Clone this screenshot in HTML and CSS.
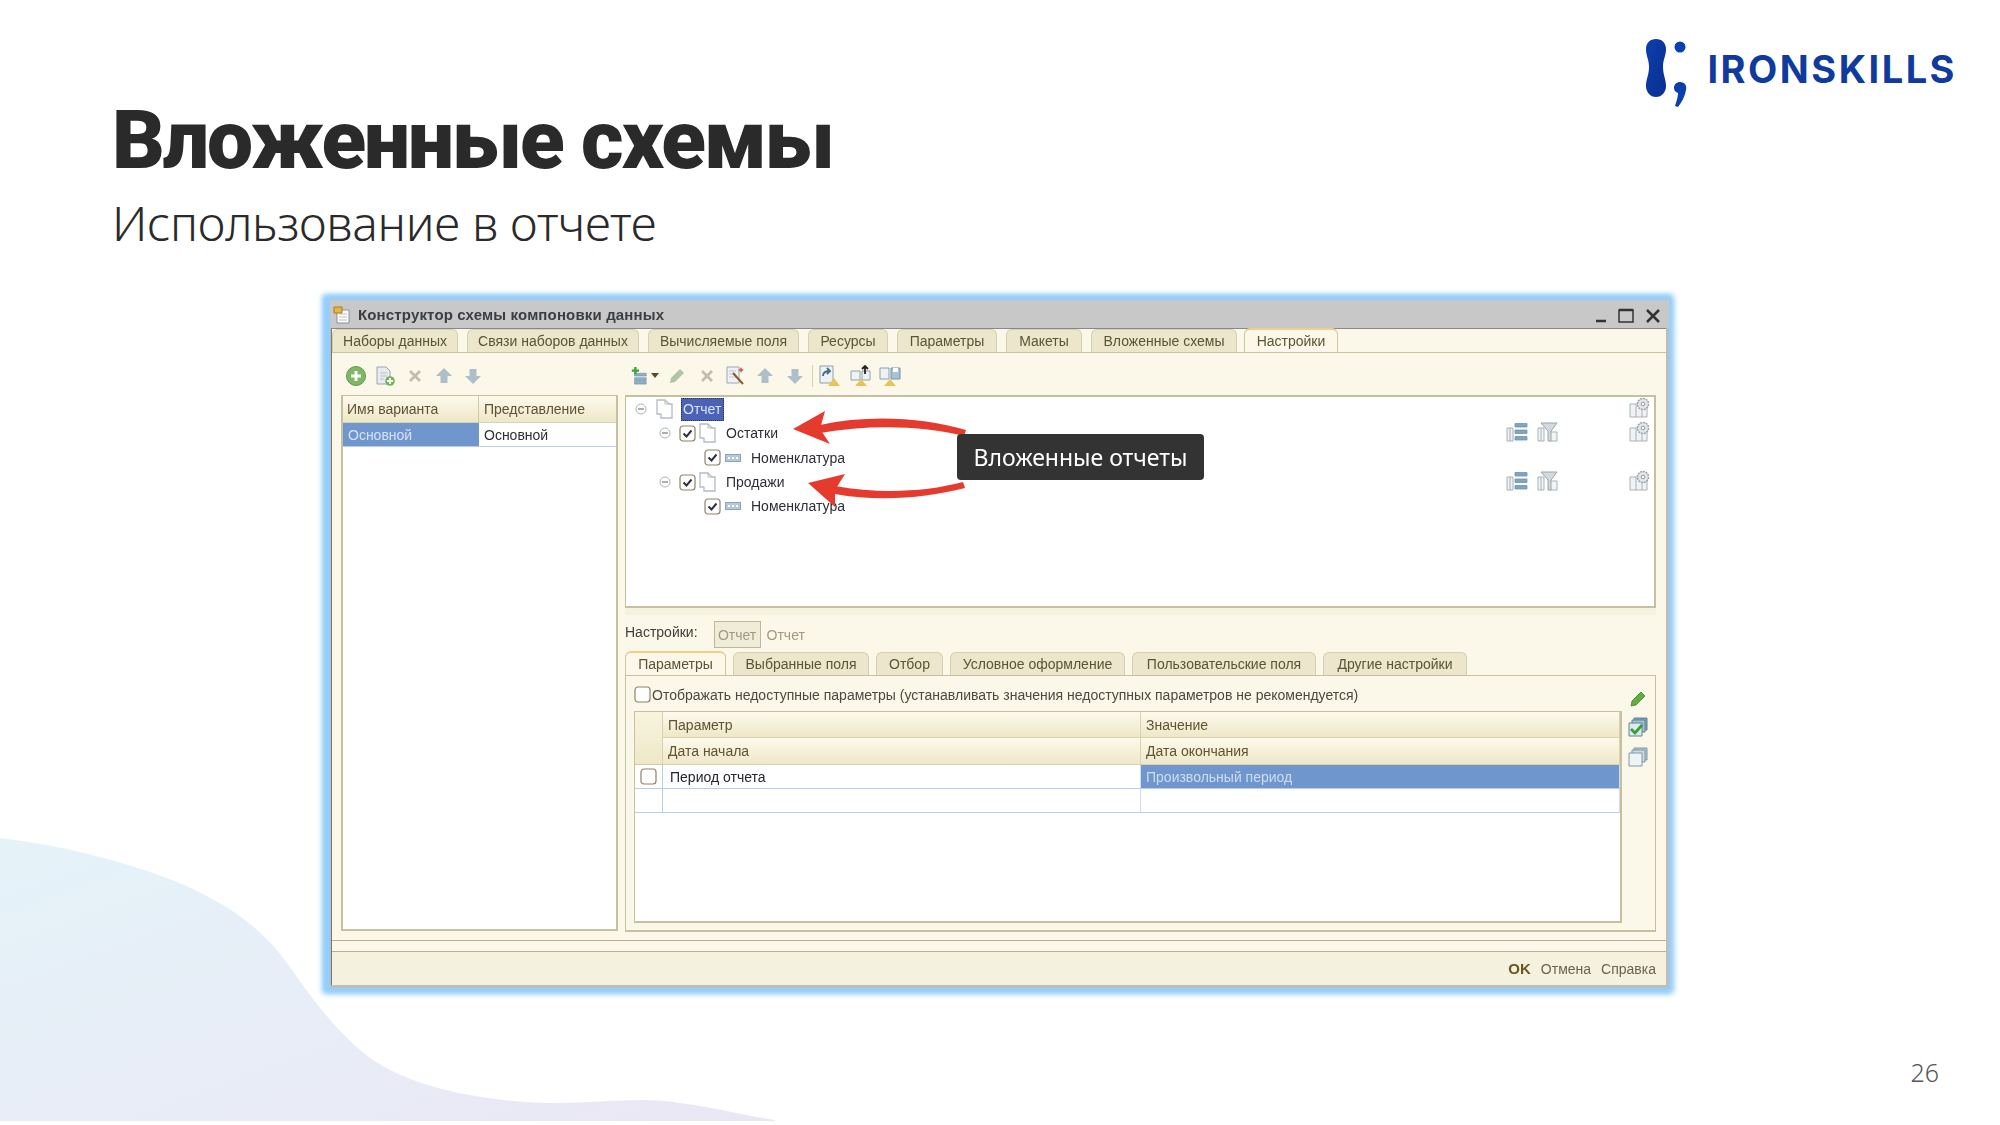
FILE: index.html
```html
<!DOCTYPE html>
<html lang="ru">
<head>
<meta charset="utf-8">
<title>Вложенные схемы</title>
<link rel="stylesheet" href="styles.css">
</head>
<body>
<svg width="0" height="0" class="defs">
  <defs>
    <linearGradient id="blobfill" x1="0" y1="0" x2="1" y2="1">
      <stop offset="0" stop-color="#e5f3f9"/><stop offset="1" stop-color="#eae7f4"/>
    </linearGradient>
    <linearGradient id="markfill" x1="0" y1="0" x2="1" y2="1">
      <stop offset="0" stop-color="#0b3fae"/><stop offset="1" stop-color="#0a2f8e"/>
    </linearGradient>
    <symbol id="up" viewBox="0 0 18 18"><path d="M9 1 17 9H12.500V16H5.500V9H1Z" fill="#aebfc9"/></symbol>
    <symbol id="down" viewBox="0 0 18 18"><path d="M9 17 17 9H12.500V2H5.500V9H1Z" fill="#aebfc9"/></symbol>
    <symbol id="cross" viewBox="0 0 16 16"><path d="M2 4 4 2 8 6 12 2 14 4 10 8 14 12 12 14 8 10 4 14 2 12 6 8Z" fill="#c4bbb2"/></symbol>
    <symbol id="doc" viewBox="0 0 20 20"><path d="M2 1H10L14 5V15H2Z" fill="#fff" stroke="#b4bcc6" stroke-width="1.300"/><path d="M14 5H17V19H6V15" fill="#fff" stroke="#b4bcc6" stroke-width="1.300"/><path d="M10 1V5H14" fill="none" stroke="#b4bcc6"/></symbol>
    <symbol id="minus" viewBox="0 0 12 12"><circle cx="6" cy="6" r="5" fill="#fff" stroke="#aeb2b2"/><path d="M3 6H9" stroke="#7d8488" stroke-width="1.300"/></symbol>
    <symbol id="check" viewBox="0 0 17 17"><rect x="1" y="1" width="15" height="15" rx="3" fill="#fff" stroke="#8d8467" stroke-width="1.200"/><path d="M4.500 8.500 7.500 11.500 12.500 5.500" fill="none" stroke="#2e3238" stroke-width="2"/></symbol>
    <symbol id="box" viewBox="0 0 17 17"><rect x="1" y="1" width="15" height="15" rx="3" fill="#fff" stroke="#8d8467" stroke-width="1.200"/></symbol>
    <symbol id="field" viewBox="0 0 16 8"><rect x=".500" y=".500" width="15" height="7" fill="#b7c9d8" stroke="#8ea3b5"/><path d="M3 4H5M7 4H9M11 4H13" stroke="#fff" stroke-width="2"/></symbol>
    <symbol id="db" viewBox="0 0 22 20"><path d="M1 6H7V19H1ZM4 6V19" fill="#eef0f1" stroke="#a8b2b8"/><path d="M9 1.500H21V5H9ZM9 8H21V11.500H9ZM9 14.500H21V18H9Z" fill="#7fa5c4" stroke="#6f94b3" stroke-width=".8"/></symbol>
    <symbol id="filt" viewBox="0 0 21 20"><path d="M1 6H7V19H1ZM4 6V19M13 10H20V19H13Z" fill="#f3f4f5" stroke="#a8b2b8"/><path d="M4 1H20L14 9V19H11V9Z" fill="#d3d9dc" stroke="#9aa5ab"/></symbol>
    <symbol id="gear" viewBox="0 0 21 20"><path d="M1 6H18V19H1ZM7 6V19M13 6V19" fill="#f1f2f3" stroke="#a8b2b8"/><circle cx="14" cy="6" r="5.500" fill="#e4e7e9" stroke="#9aa4aa" stroke-width="1.500" stroke-dasharray="2 .8"/><circle cx="14" cy="6" r="1.800" fill="#fff" stroke="#8c979d"/></symbol>
  </defs>
</svg>

<main class="slide">
  <svg class="blob" viewBox="0 0 800 300" width="800" height="300" aria-hidden="true">
    <path d="M0 0C60 7 120 22 172 42C225 63 262 90 287 125C305 150 335 195 373 222C410 247 470 262 545 265C600 266 640 258 680 265C720 270 745 278 775 282L775 283H0Z" fill="url(#blobfill)"/>
  </svg>

  <header class="top">
    <div class="headings">
      <h1 class="title">Вложенные схемы</h1>
      <p class="subtitle">Использование в отчете</p>
    </div>
    <div class="logo">
      <svg class="logo-mark" viewBox="0 0 46 70" width="46" height="70" aria-hidden="true">
        <path d="M11 1C17 1 21 5 21 11C21 18 18 21 18 29C18 37 21 41 21 48C21 54 17 59 11 59C5 59 1 54 1 48C1 41 4 37 4 29C4 21 1 18 1 11C1 5 5 1 11 1Z" fill="url(#markfill)"/>
        <circle cx="35" cy="9" r="5.500" fill="#0c3fae"/>
        <path d="M35 44C40 44 42 48 41 52C40 58 37 64 33 69L30 68C32 62 33 58 33 55C30 54 29 52 29 50C29 46 32 44 35 44Z" fill="#0c3fae"/>
      </svg>
      <span class="logo-text">IRONSKILLS</span>
    </div>
  </header>

  <section class="window">
    <div class="titlebar">
      <svg class="tb-icon" viewBox="0 0 18 18" width="18" height="18" aria-hidden="true"><path d="M4 4H16V17H4Z" fill="#fff" stroke="#8a8f96"/><path d="M6 8H14M6 11H14M6 14H14" stroke="#b8bcc2"/><path d="M1 1H9V7H1Z" fill="#e8b63c" stroke="#a97d1c"/></svg>
      <span class="tb-title">Конструктор схемы компоновки данных</span>
      <div class="win-ctrls">
        <svg viewBox="0 0 72 16" width="72" height="16" aria-hidden="true"><path d="M7 14H17" stroke="#333" stroke-width="2.500"/><path d="M30 3H44V15H30Z" fill="none" stroke="#333" stroke-width="1.500"/><path d="M30 3H44" stroke="#333" stroke-width="2.500"/><path d="M58 3 70 15M70 3 58 15" stroke="#333" stroke-width="2.500"/></svg>
      </div>
    </div>

    <div class="frame">
      <nav class="tabs top-tabs">
        <span class="tab t1">Наборы данных</span>
        <span class="tab t2">Связи наборов данных</span>
        <span class="tab t3">Вычисляемые поля</span>
        <span class="tab t4">Ресурсы</span>
        <span class="tab t5">Параметры</span>
        <span class="tab t6">Макеты</span>
        <span class="tab t7">Вложенные схемы</span>
        <span class="tab active t8">Настройки</span>
      </nav>

      <div class="work">
        <aside class="left">
          <div class="toolbar tb-left">
            <svg class="ic-plus" viewBox="0 0 20 20" width="20" height="20" aria-hidden="true"><circle cx="10" cy="10" r="9.500" fill="#7eb867" stroke="#5e9a4c"/><path d="M10 5V15M5 10H15" stroke="#fff" stroke-width="3"/></svg>
            <svg class="ic-new" viewBox="0 0 20 20" width="20" height="20" aria-hidden="true"><path d="M2 1H11L15 5V18H2Z" fill="#e6ecf0" stroke="#98a6af"/><path d="M5 7H12M5 10H12M5 13H9" stroke="#b7c2c9"/><circle cx="15" cy="15" r="4.800" fill="#74b35d"/><path d="M15 12V18M12 15H18" stroke="#fff" stroke-width="1.800"/></svg>
            <svg class="ic-x" width="16" height="16" aria-hidden="true"><use href="#cross"/></svg>
            <svg class="ic-a" width="18" height="18" aria-hidden="true"><use href="#up"/></svg>
            <svg class="ic-b" width="18" height="18" aria-hidden="true"><use href="#down"/></svg>
          </div>
          <div class="list">
            <div class="list-head"><span class="lh c1">Имя варианта</span><span class="lh c2">Представление</span></div>
            <div class="list-row"><span class="cell sel c1">Основной</span><span class="cell c2">Основной</span></div>
          </div>
        </aside>

        <div class="right">
          <div class="toolbar tb-right">
            <svg class="r0" viewBox="0 0 20 20" width="18" height="18" aria-hidden="true"><path d="M5 7H18V10H5ZM5 12H18V15H5ZM5 16H18V19H5Z" fill="#8fb0c9" stroke="#6e90aa" stroke-width=".7"/><path d="M6 0V8M2 4H10" stroke="#3ba33c" stroke-width="2.600"/></svg>
            <svg class="r1" viewBox="0 0 8 5" width="8" height="5" aria-hidden="true"><path d="M0 0H8L4 5Z" fill="#5a4a20"/></svg>
            <svg class="r2" viewBox="0 0 16 16" width="16" height="16" aria-hidden="true"><path d="M11 1 15 5 6 14 1 15 2 10Z" fill="#b3c4a6"/></svg>
            <svg class="r3" width="16" height="16" aria-hidden="true"><use href="#cross"/></svg>
            <svg class="r4" viewBox="0 0 20 20" width="20" height="20" aria-hidden="true"><path d="M1 1H13V17H1Z" fill="#eef2f5" stroke="#9aa8b2"/><path d="M3 5H10M3 8H10M3 11H10" stroke="#bfc8ce"/><path d="M7 7 17 18" stroke="#8a5a2a" stroke-width="2"/><path d="M15 1 16 3 18 4 16 5 15 7 14 5 12 4 14 3Z" fill="#d1566c"/></svg>
            <svg class="r5" width="18" height="18" aria-hidden="true"><use href="#up"/></svg>
            <svg class="r6" width="18" height="18" aria-hidden="true"><use href="#down"/></svg>
            <span class="sep"></span>
            <svg class="r7" viewBox="0 0 22 22" width="22" height="22" aria-hidden="true"><path d="M1 1H14V18H1Z" fill="#eef2f5" stroke="#8ea0ac"/><path d="M4 11C4 7 7 6 11 6M8 3 11 6 8 9" fill="none" stroke="#3f6d8e" stroke-width="1.800"/><path d="M15 13 21 21H9Z" fill="#e8c35a"/></svg>
            <svg class="r8" viewBox="0 0 22 22" width="22" height="22" aria-hidden="true"><path d="M1 6H10V15H1ZM12 6H20V15H12Z" fill="#eef2f5" stroke="#8ea0ac"/><path d="M15 9V1M12 4 15 1 18 4" fill="none" stroke="#222" stroke-width="1.800"/><path d="M11 14 17 21H5Z" fill="#e8c35a"/></svg>
            <svg class="r9" viewBox="0 0 22 22" width="22" height="22" aria-hidden="true"><path d="M1 3H10V14H1Z" fill="#eef2f5" stroke="#8ea0ac"/><path d="M12 3H21V14H12Z" fill="#a9c2d4" stroke="#6f97b4"/><path d="M14 3H19V7H14Z" fill="#fff"/><path d="M11 14 17 21H5Z" fill="#e8c35a"/></svg>
          </div>

          <div class="tree">
            <div class="node n0">
              <svg class="mn" width="12" height="12" aria-hidden="true"><use href="#minus"/></svg>
              <svg class="dc d0" width="20" height="20" aria-hidden="true"><use href="#doc"/></svg>
              <span class="node-sel">Отчет</span>
              <span class="node-icons"><svg class="gr" width="21" height="20" aria-hidden="true"><use href="#gear"/></svg></span>
            </div>
            <div class="node n1">
              <svg class="mn" width="12" height="12" aria-hidden="true"><use href="#minus"/></svg>
              <svg class="ck" width="17" height="17" aria-hidden="true"><use href="#check"/></svg>
              <svg class="dc" width="20" height="20" aria-hidden="true"><use href="#doc"/></svg>
              <span class="node-text">Остатки</span>
              <span class="node-icons"><svg width="22" height="20" aria-hidden="true"><use href="#db"/></svg><svg width="21" height="20" aria-hidden="true"><use href="#filt"/></svg><svg class="gr" width="21" height="20" aria-hidden="true"><use href="#gear"/></svg></span>
            </div>
            <div class="node n2">
              <svg class="ck" width="17" height="17" aria-hidden="true"><use href="#check"/></svg>
              <svg class="fd" width="16" height="8" aria-hidden="true"><use href="#field"/></svg>
              <span class="node-text">Номенклатура</span>
            </div>
            <div class="node n1">
              <svg class="mn" width="12" height="12" aria-hidden="true"><use href="#minus"/></svg>
              <svg class="ck" width="17" height="17" aria-hidden="true"><use href="#check"/></svg>
              <svg class="dc" width="20" height="20" aria-hidden="true"><use href="#doc"/></svg>
              <span class="node-text">Продажи</span>
              <span class="node-icons"><svg width="22" height="20" aria-hidden="true"><use href="#db"/></svg><svg width="21" height="20" aria-hidden="true"><use href="#filt"/></svg><svg class="gr" width="21" height="20" aria-hidden="true"><use href="#gear"/></svg></span>
            </div>
            <div class="node n2">
              <svg class="ck" width="17" height="17" aria-hidden="true"><use href="#check"/></svg>
              <svg class="fd" width="16" height="8" aria-hidden="true"><use href="#field"/></svg>
              <span class="node-text">Номенклатура</span>
            </div>
          </div>

          <div class="settings-row">
            <span class="set-label">Настройки:</span>
            <span class="set-box">Отчет</span>
            <span class="set-val">Отчет</span>
          </div>

          <nav class="tabs sub-tabs">
            <span class="tab active s1">Параметры</span>
            <span class="tab s2">Выбранные поля</span>
            <span class="tab s3">Отбор</span>
            <span class="tab s4">Условное оформление</span>
            <span class="tab s5">Пользовательские поля</span>
            <span class="tab s6">Другие настройки</span>
          </nav>

          <div class="panel">
            <div class="panel-main">
              <div class="show-row">
                <svg width="17" height="17" aria-hidden="true"><use href="#box"/></svg>
                <span>Отображать недоступные параметры (устанавливать значения недоступных параметров не рекомендуется)</span>
              </div>
              <div class="grid">
                <div class="g-mark"></div>
                <div class="g-h">Параметр</div>
                <div class="g-h">Значение</div>
                <div class="g-h">Дата начала</div>
                <div class="g-h">Дата окончания</div>
                <div class="g-m"><svg width="17" height="17" aria-hidden="true"><use href="#box"/></svg></div>
                <div class="g-c dark">Период отчета</div>
                <div class="g-c chosen">Произвольный период</div>
                <div class="g-m"></div>
                <div class="g-c"></div>
                <div class="g-c"></div>
              </div>
            </div>
            <div class="side-icons">
              <svg viewBox="0 0 16 16" width="16" height="16" aria-hidden="true"><path d="M11 1 15 5 6 14 1 15 2 10Z" fill="#62ad3f" stroke="#3f8327" stroke-width=".8"/></svg>
              <svg viewBox="0 0 20 20" width="20" height="20" aria-hidden="true"><path d="M6 1H19V13H6Z" fill="#7fa1b4" stroke="#5e8297"/><path d="M4 3H17V15H4Z" fill="#a6c0cf" stroke="#5e8297"/><path d="M1 6H14V19H1Z" fill="#dfe9ef" stroke="#5e8297"/><path d="M3 12 7 16 14 8" fill="none" stroke="#38a02e" stroke-width="2.800"/></svg>
              <svg viewBox="0 0 20 20" width="20" height="20" aria-hidden="true"><path d="M6 1H19V13H6Z" fill="#b6c6d0" stroke="#7f97a6"/><path d="M4 3H17V15H4Z" fill="#cddae2" stroke="#7f97a6"/><path d="M1 6H14V19H1Z" fill="#eef3f6" stroke="#7f97a6"/></svg>
            </div>
          </div>
        </div>
      </div>

      <div class="band"></div>
      <footer class="win-foot">
        <span class="ok">OK</span>
        <span class="fbtn">Отмена</span>
        <span class="fbtn">Справка</span>
      </footer>
    </div>

    <svg class="arrows" viewBox="790 400 190 120" width="190" height="120" aria-hidden="true">
      <path d="M966 430C925 418 870 414 820 425L820 433C870 424 925 426 964 436Z" fill="#e53a2e"/>
      <path d="M793 429 825 411 820 429 830 444Z" fill="#e53a2e"/>
      <path d="M963 482C925 492 880 494 835 486L835 494C880 502 925 498 965 488Z" fill="#e53a2e"/>
      <path d="M808 483 845 474 835 490 835 507Z" fill="#e53a2e"/>
    </svg>
    <div class="callout">Вложенные отчеты</div>
  </section>

  <div class="page-num">26</div>
</main>
</body>
</html>
```
FILE: styles.css
```css
* { box-sizing: border-box; }
html, body { margin: 0; padding: 0; background: #fff; }
.defs { position: absolute; }
.slide {
  position: relative;
  isolation: isolate;
  width: 2000px;
  height: 1125px;
  overflow: hidden;
  background: #fff;
  font-family: "Liberation Sans", Arial, sans-serif;
}
.blob { position: absolute; left: 0; top: 838px; z-index: -1; }

.top { display: flex; justify-content: space-between; align-items: flex-start; height: 252px; padding: 38px 43px 0 112px; }
.headings { margin-top: 61px; }
.title { margin: 0; font: 900 82px/82px Roboto, sans-serif; letter-spacing: -2px; color: #2a2a2a; white-space: nowrap; }
.subtitle { margin: 12px 0 0; font: 300 48px/60px "Noto Sans", sans-serif; letter-spacing: -.3px; color: #2a2a2a; white-space: nowrap; }

.logo { display: flex; align-items: flex-start; gap: 16px; }
.logo-text { margin-top: 8px; font: 700 38px/46px Inter, sans-serif; color: #0f3a9e; letter-spacing: 2.5px; }

.window {
  position: relative;
  width: 1339px;
  height: 688px;
  margin: 48px 0 0 330px;
  background: #bdbdbd;
  box-shadow: 0 0 6px 5px #96cefa, -3px 0 5px 5px #96cefa;
  filter: blur(.4px);
  font-size: 14px;
  color: #5f5330;
}
.titlebar { display: flex; align-items: center; height: 28px; padding: 1px 8px 0 3px; background: #c8c8c8; }
.tb-icon { margin-right: 7px; }
.tb-title { font-weight: 700; font-size: 15px; letter-spacing: .15px; color: #3a3d42; }
.win-ctrls { margin-left: auto; display: flex; }

.frame { display: flex; flex-direction: column; height: 657px; margin: 0 3px 3px 1px; border-left: 1px solid #777; border-top: 1px solid #888; background: #fbf8ea; }

.tabs { display: flex; align-items: flex-end; }
.tab { display: flex; align-items: center; justify-content: center; height: 23px; margin-right: 9px; background: #ece6cc; border: 1px solid #d4cfae; border-bottom: 0; border-radius: 6px 6px 0 0; white-space: nowrap; color: #5c5333; }
.tab.active { height: 24px; background: #fbf8ea; border-color: #cdc79e; border-top: 2px solid #f2cd86; color: #5c5333; }
.top-tabs { height: 24px; flex: none; border-bottom: 1px solid #c9c4a0; }
.t1 { width: 126px; } .t2 { width: 172px; } .t3 { width: 151px; } .t4 { width: 80px; }
.t5 { width: 100px; } .t6 { width: 76px; } .t7 { width: 146px; margin-right: 7px; } .t8 { width: 94px; }
.sub-tabs { height: 23px; flex: none; }
.sub-tabs .tab { margin-right: 7px; }
.s1 { width: 101px; } .s2 { width: 136px; } .s3 { width: 67px; } .s4 { width: 175px; }
.s5 { width: 184px; } .s6 { width: 144px; }

.work { display: flex; height: 588px; flex: none; padding-left: 9px; border-bottom: 1px solid #b5b095; }

.left { width: 277px; display: flex; flex-direction: column; }
.toolbar { display: flex; align-items: center; height: 42px; flex: none; padding-top: 3px; }
.tb-left { padding-left: 5px; }
.ic-new { margin-left: 9px; } .ic-x { margin-left: 12px; } .ic-a { margin-left: 12px; } .ic-b { margin-left: 11px; }

.list { height: 536px; background: #fff; border: 1px solid #c5c0a0; border-width: 1px 2px 2px; }
.list-head { display: flex; height: 27px; }
.lh { display: flex; align-items: center; padding-left: 5px; background: linear-gradient(#fdfaec, #eee7c8); border-bottom: 1px solid #d8d2af; }
.lh.c1 { padding-left: 4px; }
.c1 { width: 136px; border-right: 1px solid #cfc9a6; }
.c2 { flex: 1; }
.list-row { display: flex; height: 24px; border-bottom: 1px solid #b8cdee; }
.cell { display: flex; align-items: center; padding-left: 5px; color: #2c2f35; }
.cell.sel { background: #6f97cd; color: #d5e3f5; border-right: 0; }

.right { width: 1031px; margin-left: 7px; display: flex; flex-direction: column; }
.tb-right { padding-left: 5px; }
.r1 { margin-left: 3px; } .r2 { margin-left: 10px; } .r3 { margin-left: 14px; } .r4 { margin-left: 11px; }
.r5 { margin-left: 10px; } .r6 { margin-left: 12px; }
.sep { width: 1px; height: 22px; margin-left: 8px; background: #d8d2af; }
.r7 { margin-left: 6px; } .r8 { margin-left: 9px; } .r9 { margin-left: 7px; }

.tree { height: 213px; flex: none; background: #fff; border: 2px solid #c5c0a0; border-width: 2px 2px 2px 1px; }
.node { display: flex; align-items: center; height: 24.300px; color: #2c2f35; }
.n0 { padding-left: 9px; }
.n1 { padding-left: 33px; }
.n2 { padding-left: 78px; }
.mn, .ck, .dc, .fd { flex: none; }
.ck { margin-left: 8px; }
.n2 .ck { margin-left: 0; }
.dc { margin-left: 2px; }
.d0 { margin-left: 8px; }
.fd { margin-left: 4px; }
.node-text { margin-left: 8px; }
.n2 .node-text { margin-left: 10px; }
.node-sel { margin-left: 6px; padding: 0 2px; width: 43px; line-height: 23px; background: #4a63b8; color: #dbe4f7; outline: 1px dotted #333; outline-offset: -1px; }
.node-icons { display: flex; margin-left: auto; margin-top: -3px; padding-right: 4px; }
.node-icons svg { margin-left: 9px; }
.node-icons .gr { margin-left: 71px; }

.settings-row { display: flex; align-items: center; height: 44px; flex: none; padding-top: 6px; background: linear-gradient(#f5f2e0 0 7px, transparent 7px); }
.set-label { margin-bottom: 2px; color: #3e3f3a; }
.set-box { display: flex; align-items: center; justify-content: center; width: 47px; height: 27px; margin: 3px 0 0 16px; background: #efecd8; border: 1px solid #bdb89c; color: #a09a80; }
.set-val { margin: 3px 0 0 6px; color: #a09a80; }

.panel { display: flex; height: 257px; flex: none; border: 1px solid #c5c0a0; border-bottom: 2px solid #c5c0a0; }
.panel-main { width: 997px; padding-left: 8px; }
.show-row { display: flex; align-items: center; gap: 1px; height: 35px; padding-top: 2px; color: #4a4a40; }
.grid { display: grid; grid-template-columns: 28px 478px 1fr; grid-template-rows: 26px 27px 24px 24px; width: 988px; height: 212px; background: #fff; border: 1px solid #c5c0a0; border-width: 1px 2px 2px 1px; }
.g-mark { grid-row: 1 / span 2; background: linear-gradient(#f8f4de, #efe8c8); border-right: 1px solid #d8d2af; border-bottom: 1px solid #cfc9a6; }
.g-h { display: flex; align-items: center; padding-left: 5px; background: linear-gradient(#fdfaec, #eee7c8); border-bottom: 1px solid #d8d2af; border-right: 1px solid #d8d2af; }
.g-m { display: flex; align-items: center; padding-left: 5px; border-right: 1px solid #b8cdee; border-bottom: 1px solid #b8cdee; }
.g-c { display: flex; align-items: center; padding-left: 7px; border-bottom: 1px solid #b8cdee; border-right: 1px solid #cddcf2; }
.dark { color: #23262b; }
.chosen { padding-left: 5px; background: #6f97cd; color: #cfdcf0; }
.side-icons { display: flex; flex-direction: column; align-items: center; gap: 10px; width: 30px; padding-top: 15px; }

.band { height: 11px; flex: none; border-bottom: 1px solid #b5b095; }
.win-foot { display: flex; align-items: center; justify-content: flex-end; gap: 10px; flex: 1; padding-right: 10px; background: #f4f1de; }
.ok { font-weight: 700; font-size: 15px; color: #6b5520; }
.fbtn { color: #6b6350; }

.arrows { position: absolute; left: 460px; top: 100px; }
.callout { position: absolute; left: 627px; top: 134px; display: flex; align-items: center; justify-content: center; width: 247px; height: 46px; background: #333; border-radius: 4px; color: #fff; font: 400 23px "Noto Sans", sans-serif; }

.page-num { margin-top: 69px; padding-right: 61px; text-align: right; font: 300 25px/30px "Noto Sans", sans-serif; color: #555; }
```
